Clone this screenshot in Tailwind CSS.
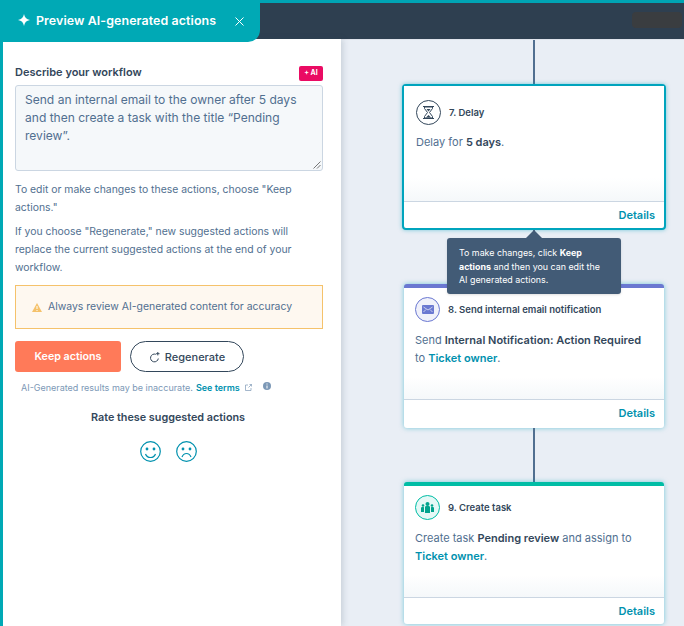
<!DOCTYPE html>
<html lang="en">
<head>
  <meta charset="UTF-8">
  <title>Preview AI-generated actions</title>
  <script src="https://cdn.jsdelivr.net/npm/@tailwindcss/browser@4"></script>
</head>
<body class="font-['Inter',sans-serif] text-[#33475b] bg-white">
  <div class="relative w-[684px] h-[626px] overflow-hidden flex flex-col">

    <!-- top bar -->
    <div class="h-[3px] bg-[#00a4b4]"></div>
    <div class="h-[36px] bg-[#2e3f50] shrink-0 flex justify-end items-start pt-[9px] pr-[2px]">
      <div class="w-[50px] h-[16px] bg-[#3a3d40] rounded-sm"></div>
    </div>

    <!-- panel tab -->
    <div class="absolute left-0 top-0 w-[260px] h-[42px] bg-[#00a9b5] rounded-br-[12px] flex items-center pl-[18px] text-white z-20">
      <svg width="12" height="12" viewBox="0 0 12 12" class="-mt-[2px]"><path d="M6 0C6.600 3.600 8.400 5.400 12 6 8.400 6.600 6.600 8.400 6 12 5.400 8.400 3.600 6.600 0 6 3.600 5.400 5.400 3.600 6 0Z" fill="#fff"/></svg>
      <span class="ml-[6px] text-[12.4px] font-semibold tracking-[0.1px]">Preview AI-generated actions</span>
      <svg width="9" height="9" viewBox="0 0 9 9" class="ml-[19px]"><path d="M.5.5l8 8M8.500.5l-8 8" stroke="#fff" stroke-width="1"/></svg>
    </div>

    <div class="flex flex-1 min-h-0">
      <!-- left panel -->
      <aside class="w-[341px] shrink-0 border-l-[3px] border-[#00a9b5] bg-white pl-[12px] pr-[18px] pt-[26px] z-10 shadow-[2px_0_6px_rgba(51,71,91,0.18)]">
        <div class="flex justify-between items-center h-[16px]">
          <span class="text-[11px] font-semibold -mt-[1px]">Describe your workflow</span>
          <span class="w-[24px] h-[15px] bg-[#ea0b63] rounded-[2px] text-white text-[7px] font-bold flex items-center justify-center">+ AI</span>
        </div>
        <div class="relative mt-[4px] h-[86px] bg-[#f5f8fa] border border-[#cbd6e2] rounded-[3px] px-[9px] pt-[5px] text-[#516f90] text-[12.05px] leading-[18px]">
          Send an internal email to the owner after 5 days and then create a task with the title “Pending review”.
          <svg width="8" height="8" viewBox="0 0 8 8" class="absolute right-[1px] bottom-[1px]"><path d="M7.500.5l-7 7M7.500 4l-3.500 3.500" stroke="#555" stroke-width=".8"/></svg>
        </div>
        <p class="mt-[10px] text-[#516f90] text-[10.4px] leading-[18px]">To edit or make changes to these actions, choose "Keep actions."</p>
        <p class="mt-[6px] text-[#516f90] text-[10.4px] leading-[18px]">If you choose "Regenerate," new suggested actions will replace the current suggested actions at the end of your workflow.</p>
        <div class="mt-[8px] h-[44px] bg-[#fef8f0] border border-[#f5c26b] flex items-center pl-[16px] text-[#516f90] text-[10.45px]">
          <svg width="10" height="9" viewBox="0 0 10 9"><path d="M5 0l5 9H0z" fill="#f5c26b"/><path d="M5 3v3M5 7v1" stroke="#fff" stroke-width="1"/></svg>
          <span class="ml-[6px]">Always review AI-generated content for accuracy</span>
        </div>
        <div class="mt-[12px] flex gap-[9px]">
          <button class="w-[106px] h-[31px] pt-[1px] bg-[#ff7a59] rounded-[3px] text-white text-[10.7px] font-semibold">Keep actions</button>
          <button class="w-[114px] h-[31px] pt-[1px] border border-[#33475b] rounded-full text-[11px] font-medium flex items-center justify-center gap-[5px]">
            <svg width="11" height="11" viewBox="0 0 11 11" fill="none"><path d="M6.800 2.300A3.900 3.900 0 1 0 9.300 6.500" stroke="#33475b" stroke-width="1"/><path d="M8.800 0v3.400M7.100 1.700h3.400" stroke="#33475b" stroke-width="1"/></svg>
            Regenerate
          </button>
        </div>
        <div class="mt-[9px] ml-[6px] flex items-center text-[9px] text-[#7c98b6]">
          <span>AI-Generated results may be inaccurate.</span>
          <span class="ml-[3px] font-semibold text-[#0091ae]">See terms</span>
          <svg width="7" height="7" viewBox="0 0 7 7" fill="none" class="ml-[5px]"><path d="M3 1H.5v5.500H6V4M3.500 3.500L6.500.5M4.500.5h2v2" stroke="#7c98b6" stroke-width=".7"/></svg>
          <svg width="8" height="8" viewBox="0 0 8 8" class="ml-[11px] -mt-[3px]"><circle cx="4" cy="4" r="4" fill="#7c98b6"/><path d="M4 3.500v3M4 1.500v1" stroke="#fff" stroke-width="1"/></svg>
        </div>
        <p class="mt-[15px] text-center text-[10.8px] font-semibold pr-[2px]">Rate these suggested actions</p>
        <div class="mt-[15px] flex justify-center gap-[15px] pr-[2px]">
          <svg width="21" height="21" viewBox="0 0 21 21" fill="none" stroke="#0091ae" stroke-width="1.200"><circle cx="10.500" cy="10.500" r="9.800"/><path d="M5.500 13c1 2.500 3 3.500 5 3.500s4-1 5-3.500"/><circle cx="7" cy="8" r=".8" fill="#0091ae"/><circle cx="14" cy="8" r=".8" fill="#0091ae"/></svg>
          <svg width="21" height="21" viewBox="0 0 21 21" fill="none" stroke="#0091ae" stroke-width="1.200"><circle cx="10.500" cy="10.500" r="9.800"/><path d="M6 16c1-2.500 2.700-3.500 4.500-3.500S14 13.500 15 16"/><circle cx="7" cy="8" r=".8" fill="#0091ae"/><circle cx="14" cy="8" r=".8" fill="#0091ae"/></svg>
        </div>
      </aside>

      <!-- canvas -->
      <main class="relative flex-1 bg-[#e9eef5] flex flex-col items-center pl-[61px] pr-[18px] border-t border-[#dfe3eb]">
        <div class="w-[2px] h-[44px] bg-[#516f90] shrink-0"></div>

        <div class="w-[264px] h-[146px] shrink-0 bg-white border-2 border-[#00a4bd] rounded-[4px] flex flex-col shadow-[0_0_4px_rgba(0,164,189,0.5)]">
          <div class="flex-1 px-[12px] relative bg-gradient-to-b from-white from-80% to-[#f5f8fa]">
            <div class="flex items-center pt-[14px]">
              <span class="w-[25px] h-[25px] rounded-full border border-[#33475b] flex items-center justify-center">
                <svg width="11" height="13" viewBox="0 0 11 13"><path d="M0 .5h11M0 12.500h11" stroke="#33475b" stroke-width="1.200"/><path d="M1.500 1h8v1.500L6.500 6.500l3 4V12h-8v-1.500l3-4-3-4z" fill="none" stroke="#33475b" stroke-width="1"/><path d="M3 11.500L5.500 9 8 11.500z" fill="#33475b"/><path d="M3.500 3h4L5.500 5.500z" fill="#33475b"/></svg>
              </span>
              <span class="ml-[8px] pt-[2px] text-[9.5px] font-semibold">7. Delay</span>
            </div>
            <p class="mt-[8px] text-[11px] leading-[18px] text-[#516f90]">Delay for <b class="font-semibold text-[#33475b]">5 days</b>.</p>
          </div>
          <div class="h-[27px] border-t border-[#cbd6e2] flex items-center justify-end pr-[9px] text-[11px] font-semibold text-[#0091ae]">Details</div>
        </div>

        <div class="w-[2px] h-[54px] bg-[#516f90] shrink-0"></div>

        <div class="w-[260px] h-[144px] shrink-0 bg-white border-t-4 border-[#6a78d1] rounded-[3px] flex flex-col shadow-[0_0_5px_rgba(0,164,189,0.5)]">
          <div class="flex-1 px-[11px] bg-gradient-to-b from-white from-80% to-[#f5f8fa]">
            <div class="flex items-center pt-[9px]">
              <span class="w-[25px] h-[25px] rounded-full border border-[#6a78d1] bg-[#f0f1fa] flex items-center justify-center">
                <svg width="12" height="9" viewBox="0 0 12 9"><rect width="12" height="9" rx="1" fill="#6a78d1"/><path d="M1.500 2l4.500 3 4.500-3M1.500 7l2.500-2.500M10.500 7L8 4.500" stroke="#f0f1fa" stroke-width=".7" fill="none"/></svg>
              </span>
              <span class="ml-[8px] pt-[2px] text-[9.5px] font-semibold">8. Send internal email notification</span>
            </div>
            <p class="mt-[9px] text-[11px] leading-[18px] text-[#516f90]">Send <b class="font-semibold text-[#33475b]">Internal Notification: Action Required</b><br>to <b class="font-semibold text-[#0091ae]">Ticket owner</b>.</p>
          </div>
          <div class="h-[29px] pb-[2px] border-t border-[#cbd6e2] flex items-center justify-end pr-[9px] text-[11px] font-semibold text-[#0091ae]">Details</div>
        </div>

        <div class="w-[2px] h-[54px] bg-[#516f90] shrink-0"></div>

        <div class="w-[260px] h-[142px] shrink-0 bg-white border-t-4 border-[#00bda5] rounded-[3px] flex flex-col shadow-[0_0_5px_rgba(0,164,189,0.5)]">
          <div class="flex-1 px-[11px] bg-gradient-to-b from-white from-80% to-[#f5f8fa]">
            <div class="flex items-center pt-[9px]">
              <span class="w-[25px] h-[25px] rounded-full border border-[#00bda5] bg-[#e5f8f6] flex items-center justify-center">
                <svg width="13" height="11" viewBox="0 0 13 11" fill="#00a38d"><circle cx="6.500" cy="2" r="2"/><path d="M4 5c0-.8.700-1 2.500-1S9 4.200 9 5v6H4z"/><circle cx="2" cy="3.500" r="1.300"/><path d="M0 6c0-.8.500-1 2-1 .8 0 1 .2 1 .5V10H0z"/><circle cx="11" cy="3.500" r="1.300"/><path d="M13 6c0-.8-.5-1-2-1-.8 0-1 .2-1 .5V10h3z"/></svg>
              </span>
              <span class="ml-[8px] pt-[2px] text-[9.5px] font-semibold">9. Create task</span>
            </div>
            <p class="mt-[9px] text-[11px] leading-[18px] text-[#516f90]">Create task <b class="font-semibold text-[#33475b]">Pending review</b> and assign to<br><b class="font-semibold text-[#0091ae]">Ticket owner</b>.</p>
          </div>
          <div class="h-[27px] border-t border-[#cbd6e2] flex items-center justify-end pr-[9px] text-[11px] font-semibold text-[#0091ae]">Details</div>
        </div>

        <!-- tooltip -->
        <div class="absolute left-[106px] top-[198px] w-[174px] h-[56px] bg-[#425b76] rounded-[3px] px-[12px] pt-[8px] text-white text-[8.9px] leading-[13.5px] shadow-sm">
          <span class="absolute left-[79px] -top-[8px] w-0 h-0 border-x-[8px] border-x-transparent border-b-[8px] border-b-[#425b76]"></span>
          To make changes, click <b>Keep</b><br><b>actions</b> and then you can edit the<br>AI generated actions.
        </div>
      </main>
    </div>
  </div>
</body>
</html>
